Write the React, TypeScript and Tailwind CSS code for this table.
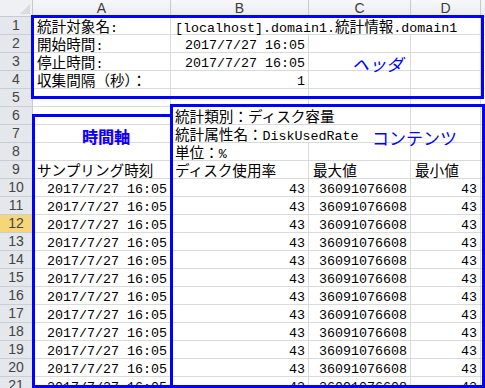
import React from "react";

type Row = {
	a?: string;
	b?: string;
	c?: string;
	d?: string;
	aRight?: boolean;
	bRight?: boolean;
	cRight?: boolean;
	dRight?: boolean;
	bSpan?: number;
};

const stamp = "2017/7/27 16:05";

const rows: Row[] = [
	{ a: "統計対象名:", b: "[localhost].domain1.統計情報.domain1", bSpan: 3 },
	{ a: "開始時間:", b: stamp, bRight: true },
	{ a: "停止時間:", b: stamp, bRight: true },
	{ a: "収集間隔（秒）：", b: "1", bRight: true },
	{},
	{ b: "統計類別：ディスク容量", bSpan: 2 },
	{ b: "統計属性名：DiskUsedRate", bSpan: 2 },
	{ b: "単位：%" },
	{ a: "サンプリング時刻", b: "ディスク使用率", c: "最大値", d: "最小値" },
	...Array.from({ length: 12 }, () => ({
		a: stamp,
		b: "43",
		c: "36091076608",
		d: "43",
		aRight: true,
		bRight: true,
		cRight: true,
		dRight: true,
	})),
];

// latin in a monospace, kana/kanji in a CJK face, like the sheet's gothic font
function Mixed({ text }: { text: string }) {
	const parts = text.match(/[\x00-\x7F]+|[^\x00-\x7F]+/g) ?? [];
	return (
		<>
			{parts.map((p, i) =>
				/^[\x00-\x7F]/.test(p) ? (
					<span key={i} className="font-['Liberation_Mono',monospace] text-[13.33px] leading-[17px]">
						{p}
					</span>
				) : (
					<span key={i} className="font-['Noto_Sans_CJK_JP',sans-serif] text-[14.6px] leading-[17px]">
						{p}
					</span>
				),
			)}
		</>
	);
}

function Cell({ text, right, span = 1 }: { text?: string; right?: boolean; span?: number }) {
	const spanCls = span === 3 ? "col-span-3" : span === 2 ? "col-span-2" : "";
	return (
		<div
			className={`${spanCls} h-[18px] overflow-visible whitespace-nowrap border-b border-r border-[#dadada] leading-[17px] text-black ${
				right ? "pr-[3px] text-right" : "pl-[4px]"
			}`}
		>
			{text && <Mixed text={text} />}
		</div>
	);
}

function ColHead({ label }: { label: string }) {
	return (
		<div className="flex h-[17px] items-center justify-center border-b border-r border-[#c6cad0] bg-gradient-to-b from-[#f7f8fa] to-[#e9ecf0] font-['Liberation_Sans',sans-serif] text-[14px] text-[#3c3c3c]">
			{label}
		</div>
	);
}

export default function App() {
	return (
		<div className="relative h-[388px] w-[485px] overflow-hidden bg-white">
			<div className="grid grid-cols-[33px_138px_138px_102px_70px_1fr]">
				<div className="relative h-[17px] border-b border-r border-[#c6cad0] bg-[#eef0f3]">
					<svg className="absolute bottom-[2px] right-[2px]" width="10" height="10" viewBox="0 0 10 10">
						<polygon points="10,0 10,10 0,10" fill="#d8dbe0" />
					</svg>
				</div>
				<ColHead label="A" />
				<ColHead label="B" />
				<ColHead label="C" />
				<ColHead label="D" />
				<ColHead label="" />

				{rows.map((r, i) => (
					<React.Fragment key={i}>
						<div
							className={`flex h-[18px] items-center justify-center border-b border-r border-[#c9ced6] font-['Liberation_Sans',sans-serif] text-[14px] text-[#444] ${
								i === 11 ? "bg-[#f7d67a]" : "bg-[#e4e7ec]"
							}`}
						>
							{i + 1}
						</div>
						<Cell text={r.a} right={r.aRight} />
						<Cell text={r.b} right={r.bRight} span={r.bSpan} />
						{(r.bSpan ?? 1) < 2 && <Cell text={r.c} right={r.cRight} />}
						{(r.bSpan ?? 1) < 3 && <Cell text={r.d} right={r.dRight} />}
						<Cell />
					</React.Fragment>
				))}
			</div>

			{/* blue annotation boxes drawn over the sheet */}
			<div className="absolute left-[31px] top-[15px] h-[84px] w-[453px] border-[3px] border-[#0000ff]" />
			<div className="absolute left-[32px] top-[114px] h-[274px] w-[141px] border-[3px] border-[#0000ff]" />
			<div className="absolute left-[170px] top-[104px] h-[284px] w-[315px] border-[3px] border-[#0000ff]" />

			<div className="absolute left-[352px] top-[54px] font-['Noto_Sans_CJK_JP',sans-serif] text-[17px] italic leading-[20px] text-[#0000ff]">
				ヘッダ
			</div>
			<div className="absolute left-[82px] top-[126px] font-['Noto_Sans_CJK_JP',sans-serif] text-[16px] font-bold leading-[20px] text-[#0000ff] [text-shadow:1px_0_0_rgba(255,0,255,0.35)]">
				時間軸
			</div>
			<div className="absolute left-[372px] top-[127px] font-['Noto_Sans_CJK_JP',sans-serif] text-[17px] leading-[22px] text-[#0000ff]">
				コンテンツ
			</div>
		</div>
	);
}
